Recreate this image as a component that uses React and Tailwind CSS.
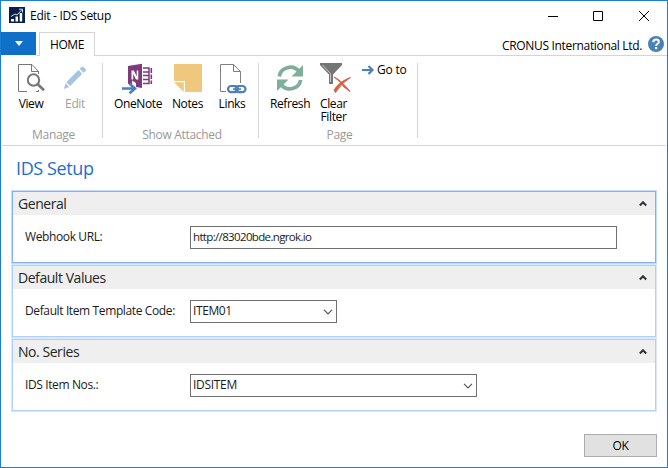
import React from "react";

const ViewIcon = () => (
  <svg className="block shrink-0" width="30" height="32" viewBox="18 62 30 32" fill="none">
    <path d="M29 91.5H20.500V64.500H34L40.500 71.500V74M40.500 90V91.500H38M33.500 64.500V71.500H40.500" stroke="#777" />
    <circle cx="35.500" cy="80" r="5.700" stroke="#777" strokeWidth="2" fill="#fff" />
    <path d="M39.500 84L46 90.300" stroke="#777" strokeWidth="2.600" />
  </svg>
);

const EditIcon = () => (
  <svg className="block shrink-0" width="30" height="32" viewBox="60 62 30 32" fill="#a6c3e0">
    <path d="M78.500 70L82.200 73.700L70.200 86L66.300 82.200Z" />
    <path d="M79.700 68.800L82 66.600Q83.400 66.600 85.900 69.500V70.700L83.500 72.700Z" />
    <path d="M65.500 83.200L69.200 87L63.800 88.900Z" />
  </svg>
);

const OneNoteIcon = () => (
  <svg className="block shrink-0" width="34" height="32" viewBox="121 62 34 32">
    <path d="M128 66L142 63.700V88L136 87V83L132 80.500V84H128Z" fill="#80397b" />
    <path d="M131.500 79.500V70.500H133.800L136.700 76.200V70.500H138.300V79.500H136L133.200 73.800V79.500Z" fill="#fff" />
    <path d="M143 68H149V83.500H143" fill="none" stroke="#80397b" strokeWidth="1.500" />
    <path d="M143 72H149M143 75.500H149M143 79.500H149M151.300 68V73M151.300 74.500V79M151.300 80.500V84" stroke="#80397b" strokeWidth="1.600" />
    <path d="M122 88.500H134M129.500 83.700L135 88.500L129.500 93.300" fill="none" stroke="#4a80bd" strokeWidth="2.600" />
  </svg>
);

const NotesIcon = () => (
  <svg className="block shrink-0" width="30" height="32" viewBox="172 62 30 32">
    <path d="M173 64H201V92H184V81H173Z" fill="#efc87e" />
    <path d="M173 82.300H182.800V92Z" fill="#efc87e" />
  </svg>
);

const LinksIcon = () => (
  <svg className="block shrink-0" width="30" height="32" viewBox="217 62 30 32" fill="none">
    <path d="M226 91.500H220.500V64.500H233.500L240.500 71.500V83M233.500 64.500V71.500H240.500" stroke="#808080" />
    <rect x="228" y="86" width="10" height="6.200" rx="3.100" stroke="#4a80bd" strokeWidth="2.200" />
    <rect x="235.500" y="86" width="10" height="6.200" rx="3.100" stroke="#4a80bd" strokeWidth="2.200" />
    <path d="M233 89.100H241" stroke="#4a80bd" strokeWidth="1.600" />
  </svg>
);

const RefreshIcon = () => (
  <svg className="block shrink-0" width="30" height="32" viewBox="275 62 30 32" fill="none">
    <path d="M279.300 76.500A11 10.500 0 0 1 299 71.500M300.700 80A11 10.500 0 0 1 281 84.500" stroke="#7fae9b" strokeWidth="3.700" />
    <path d="M303 65V76.500H291.500ZM277 91V79.500H288.500Z" fill="#7fae9b" />
  </svg>
);

const ClearFilterIcon = () => (
  <svg className="block shrink-0" width="34" height="32" viewBox="318 62 34 32">
    <path d="M320 63H342V65L333 74.500V84H329V74.500L320 65Z" fill="#757575" />
    <path d="M322.500 65L330.500 73.500V82" fill="none" stroke="#c7c7c7" />
    <path d="M334 77Q341 80 350 91.500L344 87Q339 80 334 77ZM350.500 77.500Q342 82 335.500 92.500L334 90Q340 81 350.500 77.500Z" fill="#d75f40" stroke="#d75f40" strokeWidth="1" />
  </svg>
);

const Collapse = () => (
  <svg className="block" width="8" height="6" viewBox="0 0 8 6" fill="none">
    <path d="M.8 4.500L4 1.300L7.200 4.500" stroke="#333" strokeWidth="2.100" />
  </svg>
);

const Tool = ({ icon, width, children }) => (
  <div className={`${width} flex shrink-0 flex-col items-center`}>
    {icon}
    <div className="mt-[3px] text-center leading-[13px] whitespace-nowrap">{children}</div>
  </div>
);

const Group = ({ width, pad, label, children }) => (
  <div className={`${width} flex shrink-0 flex-col`}>
    <div className={`${pad} flex h-[70px] pt-1.5`}>{children}</div>
    <div className="mt-px pl-[3px] text-center leading-4 tracking-[-0.3px] text-[#999]">{label}</div>
  </div>
);

const Divider = () => <div className="mt-[7px] h-[75px] w-px shrink-0 bg-[#d5d5d5]" />;

const Field = ({ width, value, tracking = "", dropdown }) => (
  <div className={`${width} flex h-[23px] items-center justify-between border border-[#707070] bg-white pr-[3px] pl-0.5`}>
    <span className={`${tracking} -mt-px`}>{value}</span>
    {dropdown && (
      <svg width="10" height="6" viewBox="0 0 10 6" fill="none">
        <path d="M1 .8L5 4.800L9 .8" stroke="#555" strokeWidth="1.200" />
      </svg>
    )}
  </div>
);

const Section = ({ title, label, active, children }) => (
  <section className={`h-[74px] border ${active ? "border-[#c5dcfc]" : "border-[#dbe8fb]"}`}>
    <div className={`h-[72px] border ${active ? "border-[#7fb0f8]" : "border-[#b0cffa]"}`}>
      <div className="flex h-[23px] items-center justify-between bg-[#efefef] pr-2 pl-[5px] text-[14px] tracking-[-0.45px] text-[#262626]">
        <span className="-mt-px whitespace-nowrap">{title}</span>
        <Collapse />
      </div>
      <div className="flex pt-[11px] pl-3">
        <div className="w-[165px] shrink-0 leading-[22px] whitespace-nowrap">{label}</div>
        {children}
      </div>
    </div>
  </section>
);

export default function App() {
  return (
    <div className="flex h-[468px] w-[668px] flex-col border border-[#1a7fd4] bg-white font-['Open_Sans','Noto_Sans',sans-serif] text-[12px] tracking-[-0.38px] text-[#1a1a1a]">
      <header className="flex h-[31px] shrink-0 items-start pl-2">
        <svg className="mt-1.5" width="16" height="16" viewBox="0 0 16 16" fill="none">
          <rect width="16" height="16" fill="#06204b" />
          <path d="M2 14.500V12H5V14.500ZM6.500 14.500V9.500H9V14.500ZM10.700 14.500V6H13.200V14.500Z" fill="#fff" />
          <path d="M2 9.500L6 7L8 8L13 2.500M10 2.200H13.500V5.500" stroke="#d5dfed" />
        </svg>
        <div className="ml-[5px] pt-1.5 leading-[17px] tracking-[-0.28px] text-black">Edit - IDS Setup</div>
        <svg className="mt-2 mr-4 ml-auto" width="104" height="14" viewBox="547 8 104 14" fill="none" stroke="#000">
          <path d="M548 15.500H558M593.500 10.500H602.500V19.500H593.500ZM639 10L649 20M649 10L639 20" />
        </svg>
      </header>

      <nav className="flex h-6 shrink-0">
        <div className="flex h-[23px] w-[35px] items-center justify-center bg-[#1070c8]">
          <svg width="8" height="5" viewBox="0 0 8 5"><path d="M0 0H8L4 5Z" fill="#fff" /></svg>
        </div>
        <div className="w-[3px] border-b border-[#d5d5d5]" />
        <div className="flex w-14 items-center justify-center border-x border-t border-[#d5d5d5] pt-px text-black">HOME</div>
        <div className="flex flex-1 items-center justify-end border-b border-[#d5d5d5] pr-[3px]">
          <span className="mt-1 mr-1.5 tracking-[-0.33px] text-black">CRONUS International Ltd.</span>
          <svg width="16" height="16" viewBox="0 0 16 16" fill="none">
            <circle cx="8" cy="8" r="8" fill="#4a7fb8" />
            <path d="M5.300 6.200Q5.300 3.600 8.100 3.600Q10.800 3.600 10.800 5.900Q10.800 7.100 9.300 8Q8.100 8.700 8.100 10" stroke="#fff" strokeWidth="2" />
            <path d="M7 11H9.200V13.200H7Z" fill="#fff" />
          </svg>
        </div>
      </nav>

      <div className="mx-px flex h-[90px] shrink-0 border-b border-[#d5d5d5] text-black">
        <Group width="w-[100px]" pad="pl-[7px]" label="Manage">
          <Tool width="w-11" icon={<ViewIcon />}>View</Tool>
          <Tool width="w-11" icon={<EditIcon />}><span className="text-[#a0a0a0]">Edit</span></Tool>
        </Group>
        <Divider />
        <Group width="w-[155px]" pad="pl-2" label="Show Attached">
          <Tool width="w-[54px]" icon={<OneNoteIcon />}>OneNote</Tool>
          <Tool width="w-[45px]" icon={<NotesIcon />}>Notes</Tool>
          <Tool width="w-[44px]" icon={<LinksIcon />}>Links</Tool>
        </Group>
        <Divider />
        <Group width="w-[158px]" pad="pl-2" label="Page">
          <Tool width="w-[46px]" icon={<RefreshIcon />}>Refresh</Tool>
          <Tool width="w-[43px]" icon={<ClearFilterIcon />}><div className="-ml-0.5">Clear<br />Filter</div></Tool>
          <div className="ml-1.5 flex h-4 items-center gap-[3px]">
            <svg width="12" height="10" viewBox="0 0 12 10" fill="none">
              <path d="M0 5H10M6.500 1L10.500 5L6.500 9" stroke="#4a7fba" strokeWidth="2.200" />
            </svg>
            <span className="tracking-[-0.2px] whitespace-nowrap">Go to</span>
          </div>
        </Group>
        <Divider />
      </div>

      <h1 className="mt-2.5 ml-[15px] h-[34px] text-[18px] leading-6 text-[#1b6fca]">IDS Setup</h1>

      <main className="mr-[10px] ml-[10px] shrink-0">
        <Section title="General" label="Webhook URL:" active>
          <Field width="w-[427px]" value="http://83020bde.ngrok.io" tracking="text-[11.500px] tracking-[-0.65px]" />
        </Section>
        <Section title="Default Values" label="Default Item Template Code:">
          <Field width="w-[147px]" value="ITEM01" tracking="tracking-[-0.4px]" dropdown />
        </Section>
        <Section title="No. Series" label="IDS Item Nos.:">
          <Field width="w-[287px]" value="IDSITEM" tracking="tracking-[-0.3px]" dropdown />
        </Section>
      </main>

      <footer className="mt-[22px] mr-[10px] flex justify-end">
        <button className="h-[23px] w-[73px] border border-[#adadad] bg-[#e1e1e1] leading-[21px] text-black">OK</button>
      </footer>
    </div>
  );
}
